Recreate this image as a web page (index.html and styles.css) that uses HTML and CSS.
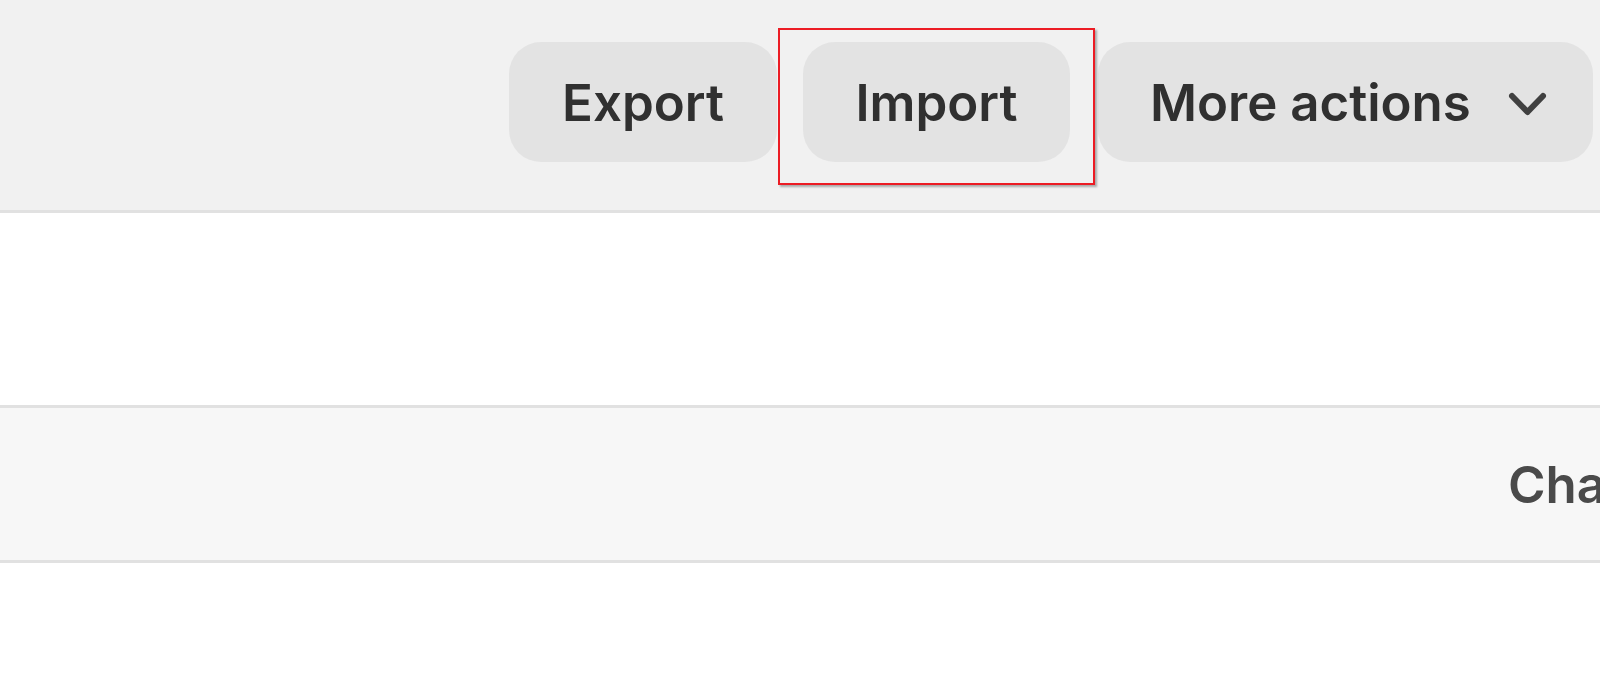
FILE: index.html
```html
<!DOCTYPE html>
<html lang="en">
<head>
<meta charset="utf-8">
<title>Products</title>
<link rel="stylesheet" href="styles.css">
</head>
<body>
<div class="page">
  <header class="topbar">
    <div class="actions">
      <button class="btn btn-export">Export</button>
      <span class="highlight">
        <button class="btn btn-import">Import</button>
      </span>
      <button class="btn btn-more">
        <span>More actions</span>
        <svg class="chev" width="39" height="27" viewBox="0 0 39 27" aria-hidden="true">
          <path d="M4 5 L19.5 21 L35 5" fill="none" stroke="#404040" stroke-width="6" stroke-linecap="round" stroke-linejoin="round"/>
        </svg>
      </button>
    </div>
  </header>
  <section class="blank"></section>
  <section class="band">
    <span class="band-label">Channels</span>
  </section>
  <section class="rest"></section>
</div>
</body>
</html>
```

FILE: styles.css
```css
* { box-sizing: border-box; }
html, body { margin: 0; padding: 0; background: #ffffff; }
body {
  font-family: Inter, "Noto Sans", "Liberation Sans", sans-serif;
  color: #303030;
  overflow: hidden;
}
.page { width: 1600px; height: 692px; overflow: hidden; }

.topbar {
  height: 213px;
  background: #f1f1f1;
  border-bottom: 3px solid #e1e1e1;
  display: flex;
  justify-content: flex-end;
  padding: 42px 7px 0 0;
}
.actions { display: flex; gap: 26px; align-items: flex-start; height: 120px; }

.btn {
  height: 120px;
  border: none;
  border-radius: 32px;
  background: #e3e3e3;
  font-family: Inter, "Noto Sans", "Liberation Sans", sans-serif;
  font-size: 51px;
  font-weight: 600;
  color: #303030;
  padding: 0;
  display: flex;
  align-items: center;
  justify-content: center;
  letter-spacing: 0;
}
.btn-export { width: 268px; }
.btn-import { width: 267px; }
.btn-more {
  width: 495px;
  justify-content: flex-start;
  padding-left: 52px;
  margin-left: 2px;
}
.btn-more .chev { margin-left: auto; margin-right: 46px; margin-top: 4px; }

.highlight { position: relative; display: block; }
.highlight::after {
  content: "";
  position: absolute;
  left: -25px;
  right: -25px;
  top: -14px;
  bottom: -23px;
  border: 2px solid #ec1c24;
  box-shadow: 2px 2px 2px rgba(0, 0, 0, 0.3);
  pointer-events: none;
}

.blank { height: 195px; background: #ffffff; border-bottom: 3px solid #e1e1e1; }
.band {
  height: 155px;
  background: #f7f7f7;
  border-bottom: 3px solid #e1e1e1;
  display: flex;
  align-items: center;
  padding-left: 1508px;
  white-space: nowrap;
}
.band-label {
  font-size: 51px;
  font-weight: 600;
  color: #4a4a4a;
}
.rest { height: 200px; background: #ffffff; }
```
